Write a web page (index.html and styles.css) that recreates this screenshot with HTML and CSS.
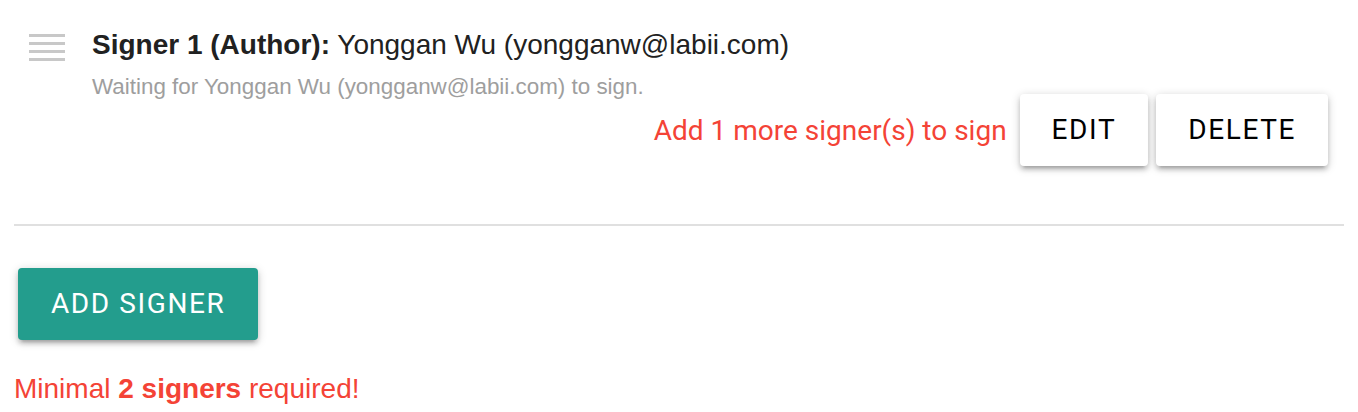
FILE: index.html
```html
<!DOCTYPE html>
<html>
<head>
<meta charset="utf-8">
<link rel="stylesheet" href="styles.css">
</head>
<body>
<div class="signers">
  <div class="signer-item">
    <div class="handle"><span></span><span></span><span></span><span></span></div>
    <div class="signer-body">
      <div class="signer-title"><b>Signer 1 (Author):</b> Yonggan Wu (yongganw@labii.com)</div>
      <div class="signer-status">Waiting for Yonggan Wu (yongganw@labii.com) to sign.</div>
      <div class="signer-actions">
        <span class="warn">Add 1 more signer(s) to sign</span>
        <button class="btn btn-light">EDIT</button>
        <button class="btn btn-light">DELETE</button>
      </div>
    </div>
  </div>
  <div class="add-row">
    <button class="btn btn-teal btn-wide">ADD SIGNER</button>
  </div>
  <div class="error">Minimal <b>2 signers</b> required!</div>
</div>
</body>
</html>
```

FILE: styles.css
```css
html, body {
  margin: 0;
  padding: 0;
  background: #fff;
}
.signers {
  padding: 0 14px;
  font-family: "Liberation Sans", Arial, sans-serif;
}
.signer-item {
  display: flex;
  padding: 29px 16px 58px 15px;
  border-bottom: 2px solid #e0e0e0;
}
.handle {
  width: 36px;
  padding-top: 5px;
  margin-right: 27px;
  display: flex;
  flex-direction: column;
  gap: 5px;
}
.handle span {
  display: block;
  height: 3px;
  background: #c8c8c8;
}
.signer-body {
  flex: 1;
}
.signer-title {
  font-size: 28px;
  line-height: 32px;
  color: #212121;
  margin-bottom: 19px;
}
.signer-title b {
  font-weight: 700;
}
.signer-status {
  font-size: 22.4px;
  line-height: 14px;
  color: #9e9e9e;
}
.signer-actions {
  display: flex;
  justify-content: flex-end;
  align-items: center;
  gap: 8px;
}
.warn {
  font-family: Roboto, "Liberation Sans", sans-serif;
  font-size: 28px;
  color: #f44336;
  margin-right: 5px;
}
.btn {
  font-family: Roboto, "Liberation Sans", sans-serif;
  font-size: 28px;
  letter-spacing: 1.6px;
  height: 72px;
  line-height: 72px;
  padding: 0 32px;
  border: none;
  border-radius: 4px;
  box-shadow: 0 4px 4px 0 rgba(0,0,0,0.14), 0 6px 2px -4px rgba(0,0,0,0.12), 0 2px 10px 0 rgba(0,0,0,0.2);
  cursor: pointer;
}
.btn-wide {
  padding: 0 33px;
}
.btn-light {
  background: #fff;
  color: #000;
}
.btn-teal {
  background: #239d8d;
  color: #fff;
}
.add-row {
  padding: 42px 0 0 4px;
}
.error {
  margin-top: 33px;
  font-size: 28px;
  line-height: 32px;
  color: #f44336;
}
```
